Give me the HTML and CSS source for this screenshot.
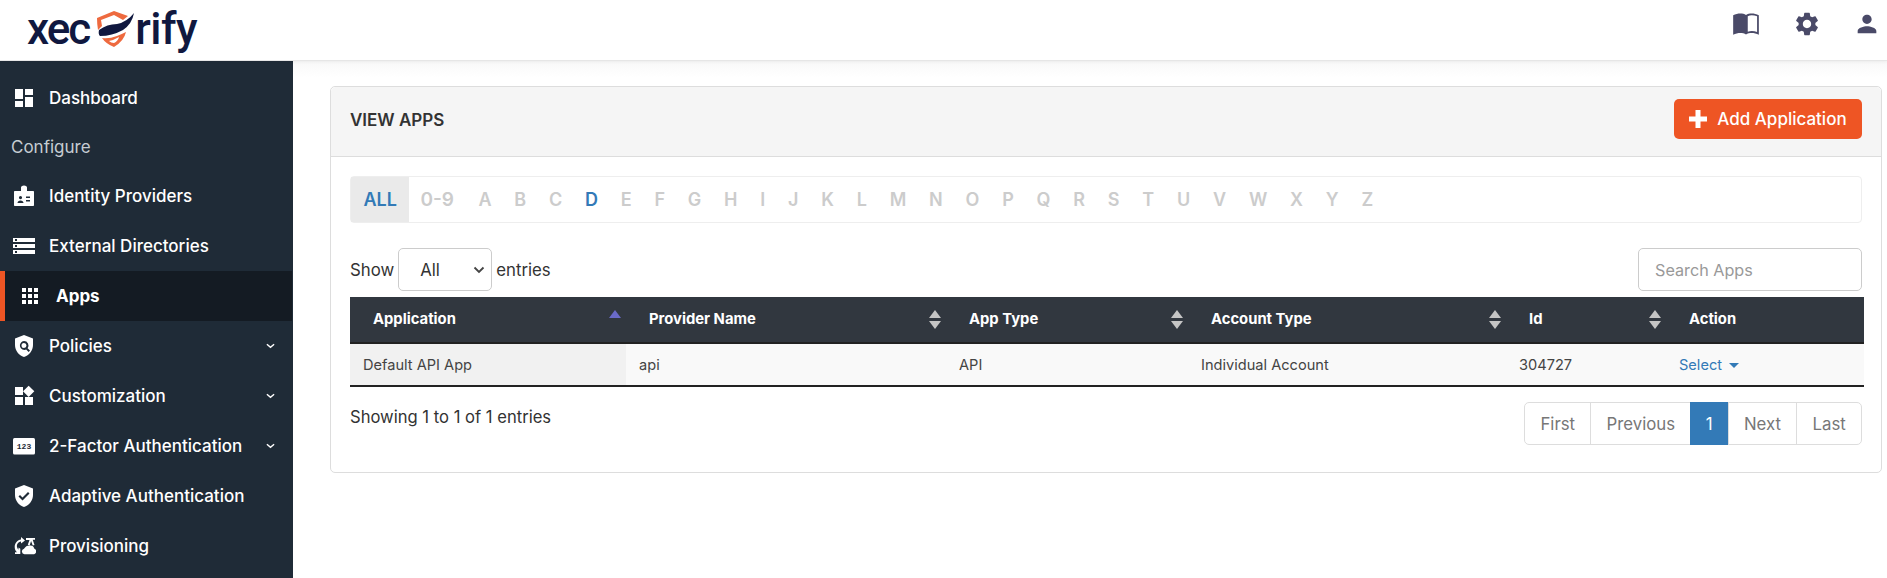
FILE: index.html
```html
<!DOCTYPE html>
<html lang="en">
<head>
<meta charset="utf-8">
<title>View Apps</title>
<link rel="stylesheet" href="styles.css">
</head>
<body>
<header class="topbar">
  <div class="logo">
    <span>xec</span>
    <svg class="logo-shield" viewBox="0 0 40 40" width="40" height="40">
      <path d="M0 8 L17 1 L31 6 L26 10 L17 5 L4 10 L5 16 L1 20 Q0 14 0 8Z" fill="#ee6a3f"/>
      <path fill-rule="evenodd" d="M5 28 Q12 29 20 26 Q25 24 29 22 Q27 31 17 37 Q9 34 5 28Z M12 31 Q17 30 22 27 Q21 31 17 33 Q14 33 12 31Z" fill="#ee6a3f"/>
      <path d="M2 20 Q10 14 20 14 Q30 12 37 3 Q35 14 26 20 Q15 26 3 26 Q1 24 2 20Z" fill="#10183f"/>
    </svg>
    <span class="logo-end">rify</span>
  </div>
  <div class="top-icons">
    <svg class="top-icon book" viewBox="0 0 24 24"><path d="M1 4.500C3 3.400 5.200 3 7 3c1.900 0 3.700.4 5 1.300V21c-1.300-.8-3.100-1.200-5-1.200-1.800 0-4 .4-6 1.400V4.500z"/><path d="M12 4.300C13.300 3.400 15.100 3 17 3c1.800 0 4 .4 6 1.500v16.700c-2-1-4.200-1.400-6-1.400-1.900 0-3.700.4-5 1.200V4.300zm1.500 1v13.400c1.100-.4 2.300-.6 3.500-.6 1.600 0 3.100.3 4.500.8V5.400C20 4.800 18.500 4.500 17 4.500c-1.300 0-2.500.3-3.500.8z"/></svg>
    <svg class="top-icon" viewBox="0 0 24 24"><path d="M19.140 12.940c.04-.3.060-.61.060-.94 0-.32-.02-.64-.07-.94l2.030-1.580c.18-.14.230-.41.120-.61l-1.920-3.320c-.12-.22-.37-.29-.59-.22l-2.390.96c-.5-.38-1.030-.7-1.620-.94l-.36-2.540c-.04-.24-.24-.41-.48-.41h-3.840c-.24 0-.43.170-.47.410l-.36 2.540c-.59.240-1.130.57-1.620.94l-2.390-.96c-.22-.08-.47 0-.59.220L2.740 8.870c-.12.210-.08.470.12.610l2.030 1.580c-.05.3-.09.630-.09.940s.02.640.07.940l-2.030 1.580c-.18.140-.23.410-.12.610l1.920 3.320c.12.220.37.290.59.220l2.390-.96c.5.380 1.030.7 1.620.94l.36 2.540c.05.240.24.410.48.410h3.840c.24 0 .44-.17.470-.41l.36-2.540c.59-.24 1.130-.56 1.620-.94l2.390.96c.22.080.47 0 .59-.22l1.920-3.320c.12-.22.070-.47-.12-.61l-2.010-1.580zM12 15.600c-1.980 0-3.600-1.620-3.600-3.600s1.620-3.600 3.600-3.600 3.600 1.620 3.600 3.600-1.620 3.600-3.600 3.600z"/></svg>
    <svg class="top-icon" viewBox="0 0 24 24"><path d="M12 12c2.210 0 4-1.790 4-4s-1.790-4-4-4-4 1.790-4 4 1.790 4 4 4zm0 2c-2.670 0-8 1.340-8 4v2h16v-2c0-2.660-5.330-4-8-4z"/></svg>
  </div>
</header>
<div class="shell">
  <nav class="sidebar">
    <a class="nav-item"><svg class="nav-icon" viewBox="0 0 24 24"><path d="M3 13h8V3H3v10zm0 8h8v-6H3v6zm10 0h8V11h-8v10zm0-18v6h8V3h-8z"/></svg>Dashboard</a>
    <div class="nav-label">Configure</div>
    <a class="nav-item"><svg class="nav-icon" viewBox="0 0 24 24"><path fill-rule="evenodd" d="M9 3.500C9 2.500 10 1.500 12 1.500s3 1 3 2V7h6c.6 0 1 .4 1 1v13c0 .6-.4 1-1 1H3c-.6 0-1-.4-1-1V8c0-.6.4-1 1-1h6V3.500zM8.500 12a1.600 1.600 0 1 0 0 3.200 1.600 1.600 0 0 0 0-3.200zM5.500 19h6c0-1.500-1.300-2.400-3-2.400s-3 .9-3 2.400zm8.500-6.500V14h4v-1.500zm0 3.500v1.500h4V16z"/></svg>Identity Providers</a>
    <a class="nav-item"><svg class="nav-icon" viewBox="0 0 24 24"><path d="M1 20h22v-4H1v4zm2-3h2v2H3v-2zM1 4v4h22V4H1zm4 3H3V5h2v2zm-4 7h22v-4H1v4zm2-3h2v2H3v-2z"/></svg>External Directories</a>
    <a class="nav-item active"><svg class="nav-icon" viewBox="0 0 24 24"><path d="M4 8h4V4H4v4zm6 12h4v-4h-4v4zm-6 0h4v-4H4v4zm0-6h4v-4H4v4zm6 0h4v-4h-4v4zm6-10v4h4V4h-4zm-6 4h4V4h-4v4zm6 6h4v-4h-4v4zm0 6h4v-4h-4v4z"/></svg>Apps</a>
    <a class="nav-item"><svg class="nav-icon" viewBox="0 0 24 24"><path fill-rule="evenodd" d="M12 1 3 4.500V11c0 5.500 3.800 10.500 9 12 5.200-1.500 9-6.500 9-12V4.500L12 1zm0 6a4.500 4.500 0 0 1 3.600 7.200l2.400 2.400-1.400 1.400-2.400-2.400A4.500 4.500 0 1 1 12 7zm0 2a2.500 2.500 0 1 0 0 5 2.500 2.500 0 0 0 0-5z"/></svg>Policies<svg class="chev" viewBox="0 0 10 6"><path d="M1 1l4 3.500L9 1" /></svg></a>
    <a class="nav-item"><svg class="nav-icon" viewBox="0 0 24 24"><path d="M13 13v8h8v-8h-8zM3 21h8v-8H3v8zM3 3v8h8V3H3zm13.660-1.310L11 7.340 16.660 13l5.660-5.660-5.660-5.650z"/></svg>Customization<svg class="chev" viewBox="0 0 10 6"><path d="M1 1l4 3.500L9 1" /></svg></a>
    <a class="nav-item"><svg class="nav-icon" viewBox="0 0 24 24"><rect x="1" y="4" width="22" height="16.500" rx="1.500"/><text x="12" y="15" class="num-text">123</text></svg>2-Factor Authentication<svg class="chev" viewBox="0 0 10 6"><path d="M1 1l4 3.500L9 1" /></svg></a>
    <a class="nav-item"><svg class="nav-icon" viewBox="0 0 24 24"><path fill-rule="evenodd" d="M12 1 3 4.500V11c0 5.500 3.800 10.500 9 12 5.200-1.500 9-6.500 9-12V4.500L12 1zm-1.500 15.500L6.500 12.500 8 11l2.500 2.500L16 8l1.500 1.500-7 7z"/></svg>Adaptive Authentication</a>
    <a class="nav-item"><svg class="nav-icon" viewBox="0 0 24 24"><path d="M9 3 13 6.500 9 9.500V7.500C6 8 4.500 10.500 5 13c.2 1.200.8 2 1.500 2.800V13.500l1.800 1.200V20H3v-1.800h2C3.500 17 2.700 15.200 2.700 13 2.700 9 5.500 6 9 5.500V3z"/><path d="M14 4h9v1.800h-2.300L22.500 11l-1.800.6-1.600-4.500-1.500 4.300-1.800-.6 1.700-4.900H14V4z"/><path d="M18.500 11.500a3.800 3.800 0 0 1 3.700 3 3 3 0 0 1 2 2.800c0 1.700-1.300 3-3 3H12.500a2.800 2.800 0 0 1-.5-5.500 6.500 6.500 0 0 1 6.500-3.300z"/></svg>Provisioning</a>
  </nav>
  <main class="content">
    <section class="card">
      <div class="card-head">
        <h1>VIEW APPS</h1>
        <button class="add-btn"><svg class="plus" viewBox="0 0 18 18"><path d="M6.500 0h5v6.500H18v5h-6.500V18h-5v-6.500H0v-5h6.500z"/></svg>Add Application</button>
      </div>
      <div class="card-body">
        <div class="alpha">
          <a class="on">ALL</a><a class="digits">0-9</a><a>A</a><a>B</a><a>C</a><a class="has">D</a><a>E</a><a>F</a><a>G</a><a>H</a><a>I</a><a>J</a><a>K</a><a>L</a><a>M</a><a>N</a><a>O</a><a>P</a><a>Q</a><a>R</a><a>S</a><a>T</a><a>U</a><a>V</a><a>W</a><a>X</a><a>Y</a><a>Z</a>
        </div>
        <div class="controls">
          <label class="length">Show
            <span class="select">All<svg viewBox="0 0 12 8"><path d="M1.500 1.500 6 6l4.500-4.500"/></svg></span>
            entries</label>
          <input class="search" placeholder="Search Apps">
        </div>
        <table class="apps">
          <colgroup><col class="c1"><col class="c2"><col class="c3"><col class="c4"><col class="c5"><col class="c6"></colgroup>
          <thead>
            <tr>
              <th><div class="th-in">Application<span class="sort asc"></span></div></th>
              <th><div class="th-in">Provider Name<span class="sort"></span></div></th>
              <th><div class="th-in">App Type<span class="sort"></span></div></th>
              <th><div class="th-in">Account Type<span class="sort"></span></div></th>
              <th><div class="th-in">Id<span class="sort"></span></div></th>
              <th><div class="th-in">Action</div></th>
            </tr>
          </thead>
          <tbody>
            <tr>
              <td class="sorted">Default API App</td>
              <td>api</td>
              <td>API</td>
              <td>Individual Account</td>
              <td>304727</td>
              <td><a class="select-link">Select<span class="caret"></span></a></td>
            </tr>
          </tbody>
        </table>
        <div class="foot">
          <div class="info">Showing 1 to 1 of 1 entries</div>
          <div class="pager"><a>First</a><a>Previous</a><a class="cur">1</a><a>Next</a><a>Last</a></div>
        </div>
      </div>
    </section>
  </main>
</div>
</body>
</html>
```
FILE: styles.css
```css
* { box-sizing: border-box; }
html, body { margin: 0; height: 100%; }
body { height: 578px; overflow: hidden; background: #fff; font-family: Inter, "Open Sans", sans-serif; color: #333; font-size: 15px; }
a { text-decoration: none; }

.topbar { height: 61px; background: #fff; border-bottom: 1px solid #e6e6e6; box-shadow: 0 1px 3px rgba(0,0,0,.05); display: flex; align-items: flex-start; justify-content: space-between; padding: 10px 6px 0 27px; position: relative; }
.logo { display: flex; align-items: flex-start; margin-top: -10px; height: 61px; font-family: Roboto, sans-serif; font-size: 44px; font-weight: 500; color: #10183f; line-height: 58px; letter-spacing: -2px; }
.logo-shield { margin: 10px -2px 0 8px; flex: none; }
.logo-end { letter-spacing: -.5px; }
.top-icons { display: flex; align-items: center; gap: 32.500px; }
.top-icon { width: 28px; height: 28px; fill: #4a4a68; }

.shell { display: flex; height: 517px; }
.sidebar { width: 293px; flex: none; background: #1f2b37; padding-top: 12px; overflow: hidden; }
.nav-item { height: 50px; display: flex; align-items: center; color: #fff; font-size: 17px; font-weight: 500; padding: 0 0 1px 12px; }
.nav-icon { width: 24px; height: 24px; fill: #fff; margin: 1px 13px 0 0; flex: none; }
.num-text { font: 600 8px "Liberation Mono", monospace; fill: #1f2b37; text-anchor: middle; }
.nav-label { height: 48px; padding: 0 0 1px 11px; display: flex; align-items: center; color: #c6ccd2; font-size: 17px; }
.nav-item.active { background: #141b23; border-left: 5px solid #ee5524; padding-left: 13px; font-weight: 700; margin-right: 1px; }
.nav-item.active .nav-icon { margin-right: 14px; }
.chev { width: 9px; height: 6px; margin: 1px 18px 0 auto; fill: none; stroke: #fff; stroke-width: 1.600; }

.content { flex: 1; padding: 25px 5px 0 37px; min-width: 0; background: linear-gradient(#f8f8f8, #fff 16px); }
.card { background: #fff; border: 1px solid #ddd; border-radius: 5px; height: 387px; }
.card-head { height: 70px; background: #f5f5f5; border-bottom: 1px solid #ddd; border-radius: 5px 5px 0 0; display: flex; align-items: center; justify-content: space-between; padding: 0 19px 5px 19px; }
.card-head h1 { margin: 1px 0 0; font-size: 17px; font-weight: 600; color: #333; }
.add-btn { height: 40px; width: 188px; background: #ee5524; color: #fff; border: 0; border-radius: 5px; font: 500 17px Inter, sans-serif; display: flex; align-items: center; justify-content: center; gap: 10px; padding: 0; }
.plus { width: 18px; height: 18px; fill: #fff; }
.card-body { padding: 19px 19px 0 19px; }

.alpha { height: 47px; border: 1px solid #eee; border-radius: 4px; display: flex; align-items: stretch; font-size: 18px; font-weight: 600; }
.alpha a { display: flex; align-items: center; padding: 0 11.400px; color: #ccc; }
.alpha a.on { background: #eaeaea; color: #337ab7; padding: 0 12.500px; }
.alpha a.digits { font-size: 19px; padding: 0 13px 0 11px; }
.alpha a.has { color: #337ab7; }

.controls { display: flex; justify-content: space-between; align-items: center; margin-top: 25px; }
.length { display: flex; align-items: center; gap: 4px; font-size: 16.800px; }
.select { width: 94px; height: 43px; border: 1px solid #ccc; border-radius: 5px; display: flex; align-items: center; justify-content: space-between; padding: 0 6px 0 21px; }
.select svg { width: 12px; height: 8px; fill: none; stroke: #444; stroke-width: 1.800; }
.search { width: 224px; height: 43px; border: 1px solid #ccc; border-radius: 5px; padding: 0 16px; font: 16.200px Inter, sans-serif; }
.search::placeholder { color: #999; }

.apps { width: 1514px; table-layout: fixed; border-collapse: collapse; margin-top: 6px; }
.c1 { width: 276px; } .c2 { width: 320px; } .c3 { width: 242px; } .c4 { width: 318px; } .c5 { width: 160px; } .c6 { width: 198px; }
.apps th { height: 46px; background: #31373f; color: #fff; font-size: 14.800px; font-weight: 700; text-align: left; padding: 0 0 1px 23px; border-bottom: 2px solid #222; }
.th-in { display: flex; align-items: center; justify-content: space-between; padding-right: 5px; line-height: 18px; }
.sort { width: 12px; height: 19px; display: flex; flex-direction: column; justify-content: space-between; align-items: center; flex: none; margin-top: 1px; }
.sort::before { content: ""; border-left: 6px solid transparent; border-right: 6px solid transparent; border-bottom: 8px solid #c5c5c5; }
.sort::after { content: ""; border-left: 6px solid transparent; border-right: 6px solid transparent; border-top: 8px solid #c5c5c5; }
.sort.asc::before { border-bottom-color: #6a6ac8; }
.sort.asc::after { border-top-color: transparent; }
.apps td { height: 43px; background: #f9f9f9; font-size: 14.600px; padding: 0 0 0 13px; border-bottom: 2px solid #222; color: #444; }
.apps td.sorted { background: #f1f1f1; }
.select-link { color: #337ab7; display: inline-flex; align-items: center; gap: 7px; }
.caret { border-left: 5px solid transparent; border-right: 5px solid transparent; border-top: 5px solid #337ab7; margin-top: 2px; }

.foot { display: flex; justify-content: space-between; align-items: flex-start; margin-top: 15px; }
.info { font-size: 16.600px; padding-top: 5px; }
.pager { display: flex; height: 43px; border: 1px solid #ddd; border-radius: 5px; font-size: 16.800px; }
.pager a { display: flex; align-items: center; padding: 0 15.250px; color: #777; border-left: 1px solid #ddd; }
.pager a:first-child { border-left: 0; }
.pager a.cur { background: #337ab7; color: #fff; margin: -1px 0; border-left: 0; }
```
